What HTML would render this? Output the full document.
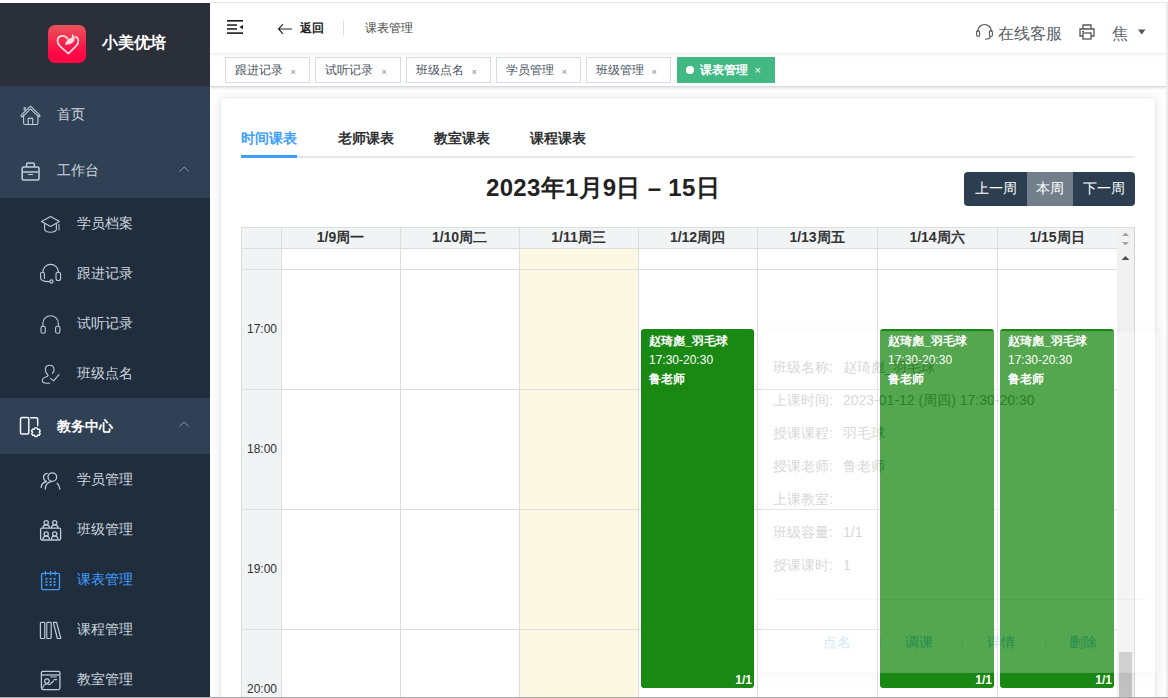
<!DOCTYPE html>
<html><head><meta charset="utf-8">
<style>
*{box-sizing:border-box;margin:0;padding:0}
html,body{width:1168px;height:698px;overflow:hidden;background:#fff;font-family:"Liberation Sans",sans-serif;}
.abs{position:absolute}
#side{position:absolute;left:0;top:3px;width:210px;height:695px;background:#304156;overflow:hidden}
#logo{position:absolute;left:0;top:0;width:210px;height:83px;background:#2b2f3a}
.logoimg{position:absolute;left:48px;top:22px;width:38px;height:38px;border-radius:7px;background:linear-gradient(#e9545c,#f81a4a 55%,#ff0744 80%)}
.logotxt{position:absolute;left:102px;top:30px;font-size:16px;font-weight:bold;color:#fff;line-height:20px}
.mi{position:absolute;left:0;width:210px;height:56px;color:#cdd5df;font-size:14px}
.mi .t{position:absolute;left:57px;top:0;line-height:56px}
.sub{position:absolute;left:0;width:210px;background:#1f2d3d}
.si{position:absolute;left:0;width:210px;height:50px;color:#cdd5df;font-size:14px}
.si .t{position:absolute;left:77px;top:0;line-height:50px}
.ic{position:absolute}
#main{position:absolute;left:210px;top:3px;width:956px;height:695px;background:#fff;overflow:hidden}
.tag{position:absolute;top:57px;height:26px;border:1px solid #d8dce5;background:#fff;color:#495060;font-size:12px;line-height:25px;padding-left:9px;white-space:nowrap}
.tag .x{position:absolute;right:13px;top:2px;font-size:11px;color:#888;transform:scale(.85)}
.tag.act{background:#42b983;border-color:#42b983;color:#fff;font-weight:bold;padding-left:22px}
.tag.act .x{color:#fff;font-weight:normal;font-size:13px;top:0;right:12px}
.tag .dot{position:absolute;left:8px;top:8px;width:8px;height:8px;border-radius:50%;background:#fff}
.tab{position:absolute;top:129px;font-size:14px;font-weight:bold;color:#303133;line-height:18px;white-space:nowrap}
.hd{height:21px;line-height:21px;text-align:center;font-size:14px;font-weight:bold;color:#333}
.tl{width:40px;padding-left:2px;text-align:center;font-size:12px;color:#333;line-height:16px}
.ev{background:#1a8914;border-radius:3px;color:#fff;font-size:12px;font-weight:bold;overflow:hidden}
.et{position:absolute;left:8px;top:3px;line-height:19px;white-space:nowrap}
.ef{position:absolute;right:2px;bottom:1px;line-height:14px}
.et span{font-weight:normal}
.pv{position:absolute;left:70px;top:0}
.pop{background:#fff;opacity:.25;border:1px solid #ebeef5;border-radius:4px;box-shadow:0 2px 12px 0 rgba(0,0,0,.1)}
.pr{left:12px;font-size:14px;color:#606266;line-height:16px;white-space:nowrap}
.pb{top:302px;font-size:14px;color:#409eff;line-height:16px;white-space:nowrap}
</style></head><body>
<div class="abs" style="left:0;top:0;width:1168px;height:3px;background:#fff"></div>
<div class="abs" style="left:210px;top:2px;width:958px;height:1px;background:#e6e6e6"></div>

<div id="side">
  <div id="logo">
    <div class="logoimg"><svg class="abs" style="left:0;top:0" width="38" height="38" viewBox="0 0 38 38" fill="none" stroke="rgba(255,255,255,.82)" stroke-width="1.8" stroke-linejoin="round" stroke-linecap="round">
<path d="M19.6 13.6 Q17.4 10.6 14 10.9 Q9.6 11.4 9.5 15.8 Q9.5 18.6 12.2 21.4 L20.4 28.6 L28 21.2 Q30.6 18.4 30.3 15.4 Q30 12.6 27.8 11.6"/>
<path d="M17.8 19.2 Q18.2 14.4 23.6 13.4 Q24.8 11.6 24.4 9.4 Q27.6 12.4 25.6 16 Q23.6 19.2 17.8 19.2 Z" fill="rgba(255,255,255,.82)" stroke-width="0.9"/>
</svg></div>
    <div class="logotxt">小美优培</div>
  </div>
  <div class="mi" style="top:83px"><span class="t">首页</span></div>
  <div class="mi" style="top:139px"><span class="t">工作台</span></div>
  <div class="sub" style="top:195px;height:200px">
    <div class="si" style="top:0"><span class="t">学员档案</span></div>
    <div class="si" style="top:50px"><span class="t">跟进记录</span></div>
    <div class="si" style="top:100px"><span class="t">试听记录</span></div>
    <div class="si" style="top:150px"><span class="t">班级点名</span></div>
  </div>
  <div class="mi" style="top:395px;color:#fff;font-weight:bold"><span class="t">教务中心</span></div>
  <div class="sub" style="top:451px;height:260px">
    <div class="si" style="top:0"><span class="t">学员管理</span></div>
    <div class="si" style="top:50px"><span class="t">班级管理</span></div>
    <div class="si" style="top:100px;color:#409eff"><span class="t">课表管理</span></div>
    <div class="si" style="top:150px"><span class="t">课程管理</span></div>
    <div class="si" style="top:200px"><span class="t">教室管理</span></div>
  </div>
</div>

<!-- ICONS -->
<svg class="abs" style="left:14px;top:98px" width="34" height="34" viewBox="0 0 34 34" fill="none" stroke="#bfcbd9" stroke-width="1.1" stroke-linecap="round" stroke-linejoin="round"><path d="M7.2 17.2 L16.5 8.2 L25.8 17.2 L25.8 18.6 L24.4 18.6 L16.5 10.9 L8.6 18.6 L7.2 18.6 Z"/><path d="M9.6 17 V25 Q9.6 26.5 11.1 26.5 H22.4 Q23.9 26.5 23.9 25 V17"/><path d="M14.2 26.4 V20.4 H18.7 V26.4"/><rect x="9.6" y="9" width="2.4" height="3.8" fill="#9aa7b6" stroke="none"/></svg>
<svg class="abs" style="left:14px;top:154px" width="34" height="34" viewBox="0 0 34 34" fill="none" stroke="#bfcbd9" stroke-width="1.1" stroke-linecap="round" stroke-linejoin="round"><rect x="8.2" y="13" width="16.8" height="13" rx="1.4" stroke-width="1.6"/><path d="M12.6 12.6 V10.2 Q12.6 8.9 13.9 8.9 H19 Q20.3 8.9 20.3 10.2 V12.6" stroke-width="1.5"/><path d="M9.6 18.1 H23.5" stroke-width="1.5"/><path d="M14.3 20.5 H18.6" stroke-width="1.1"/></svg>
<svg class="abs" style="left:34px;top:208px" width="34" height="34" viewBox="0 0 34 34" fill="none" stroke="#bfcbd9" stroke-width="1.1" stroke-linecap="round" stroke-linejoin="round"><path d="M7.5 13.4 L16.6 8.4 L25.5 13.4 L16.6 18.4 Z"/><path d="M10.6 15.6 V21.4 Q11.5 24.3 16.6 24.3 Q21.7 24.3 22.4 21.4 V15.6"/><rect x="24.2" y="15.9" width="1.5" height="6.6" fill="#8796a8" stroke="none"/></svg>
<svg class="abs" style="left:34px;top:257px" width="34" height="34" viewBox="0 0 34 34" fill="none" stroke="#bfcbd9" stroke-width="1.1" stroke-linecap="round" stroke-linejoin="round"><path d="M8.8 15.2 A7.8 7.8 0 0 1 24.4 15.2"/><path d="M10.4 21.4 V16.4 Q10.4 15.2 8.4 15.2 Q6.6 15.2 6.6 16.6 V21 Q6.6 24.6 14.6 24.6 H15.8"/><rect x="22" y="15.2" width="4.6" height="8.3" rx="2"/><circle cx="17.5" cy="24.5" r="1.6"/></svg>
<svg class="abs" style="left:34px;top:306px" width="34" height="34" viewBox="0 0 34 34" fill="none" stroke="#bfcbd9" stroke-width="1.1" stroke-linecap="round" stroke-linejoin="round"><path d="M8.9 20 V17.4 A7.7 7.7 0 0 1 24.3 17.4 V20"/><rect x="7" y="20.2" width="4.3" height="7" rx="1.8"/><rect x="21.6" y="20.2" width="4.3" height="7" rx="1.8"/></svg>
<svg class="abs" style="left:34px;top:357px" width="34" height="34" viewBox="0 0 34 34" fill="none" stroke="#bfcbd9" stroke-width="1.1" stroke-linecap="round" stroke-linejoin="round"><path d="M18.5 16.4 Q20 14.8 20 12.6 Q20 8.2 15.6 8.2 Q11.3 8.2 11.3 12.6 Q11.3 15.8 13.8 17.8 Q14.8 18.8 12.6 19.8 Q8.3 21 8.3 23.6 Q8.3 26.3 12.5 26.3 H15.6"/><path d="M16.7 21.4 L19.6 23.8 L25 17.7"/></svg>
<svg class="abs" style="left:14px;top:405px" width="34" height="34" viewBox="0 0 34 34" fill="none" stroke="#f4f6f8" stroke-width="1.1" stroke-linecap="round" stroke-linejoin="round"><rect x="6.5" y="12.4" width="8.3" height="16.6" rx="1.5" stroke-width="1.5"/><path d="M16.6 12.8 H22.2 Q23.7 12.8 23.7 14.3 V20.6" stroke-width="1.5"/><path d="M20.25 24.34 L20.81 22.83 L22.99 22.83 L23.55 24.34 L23.55 24.34 L25.14 24.07 L26.23 25.96 L25.20 27.20 L25.20 27.20 L26.23 28.44 L25.14 30.33 L23.55 30.06 L23.55 30.06 L22.99 31.57 L20.81 31.57 L20.25 30.06 L20.25 30.06 L18.66 30.33 L17.57 28.44 L18.60 27.20 L18.60 27.20 L17.57 25.96 L18.66 24.07 L20.25 24.34 Z" stroke-width="1.4"/></svg>
<svg class="abs" style="left:34px;top:463px" width="34" height="34" viewBox="0 0 34 34" fill="none" stroke="#bfcbd9" stroke-width="1.1" stroke-linecap="round" stroke-linejoin="round"><circle cx="18.3" cy="14.1" r="4.3" stroke-width="1.3"/><path d="M11.3 26 Q11.5 19.6 17.4 18.7" stroke-width="1.3"/><path d="M23.1 20.2 Q25.5 22.3 25.9 26" stroke-width="1.3"/><path d="M13.2 10.4 Q9.6 11 9.6 14.3 Q9.6 16.8 11.4 18" stroke-width="1.3"/><path d="M7.1 24.4 Q7.7 19.6 12.6 18.5" stroke-width="1.3"/></svg>
<svg class="abs" style="left:34px;top:513px" width="34" height="34" viewBox="0 0 34 34" fill="none" stroke="#bfcbd9" stroke-width="1.1" stroke-linecap="round" stroke-linejoin="round"><rect x="6.6" y="15.1" width="20" height="11.9" rx="1.4" stroke-width="1.3"/><circle cx="12.2" cy="9.7" r="2.1" stroke-width="1.3"/><path d="M9 14.6 Q9.3 11.9 12.2 11.9 Q15.1 11.9 15.5 14.6" stroke-width="1.3"/><circle cx="20.7" cy="9.7" r="2.1" stroke-width="1.3"/><path d="M17.5 14.6 Q17.8 11.9 20.7 11.9 Q23.6 11.9 24 14.6" stroke-width="1.3"/><circle cx="12.2" cy="20.9" r="2.1" stroke-width="1.3"/><path d="M9 25.9 Q9.3 23.1 12.2 23.1 Q15.1 23.1 15.5 25.9" stroke-width="1.3"/><circle cx="20.7" cy="20.9" r="2.1" stroke-width="1.3"/><path d="M17.5 25.9 Q17.8 23.1 20.7 23.1 Q23.6 23.1 24 25.9" stroke-width="1.3"/></svg>
<svg class="abs" style="left:34px;top:563px" width="34" height="34" viewBox="0 0 34 34" fill="none" stroke="#bfcbd9" stroke-width="1.1" stroke-linecap="round" stroke-linejoin="round"><rect x="7.6" y="10.4" width="17.9" height="16.2" rx="1.6" stroke="#409eff" stroke-width="1.3"/><path d="M11.4 8.3 V12 M16.6 8.3 V12 M21.2 8.3 V12" stroke="#409eff" stroke-width="1.1"/><rect x="11.5" y="14.9" width="1.9" height="1.8" fill="#409eff" stroke="none"/><rect x="11.5" y="18.1" width="1.9" height="1.8" fill="#409eff" stroke="none"/><rect x="11.5" y="21.0" width="1.9" height="1.8" fill="#409eff" stroke="none"/><rect x="15.700000000000001" y="14.9" width="1.9" height="1.8" fill="#409eff" stroke="none"/><rect x="15.700000000000001" y="18.1" width="1.9" height="1.8" fill="#409eff" stroke="none"/><rect x="15.700000000000001" y="21.0" width="1.9" height="1.8" fill="#409eff" stroke="none"/><rect x="19.6" y="14.9" width="1.9" height="1.8" fill="#409eff" stroke="none"/><rect x="19.6" y="18.1" width="1.9" height="1.8" fill="#409eff" stroke="none"/><rect x="19.6" y="21.0" width="1.9" height="1.8" fill="#409eff" stroke="none"/></svg>
<svg class="abs" style="left:34px;top:613px" width="34" height="34" viewBox="0 0 34 34" fill="none" stroke="#bfcbd9" stroke-width="1.1" stroke-linecap="round" stroke-linejoin="round"><rect x="6.4" y="9.3" width="4.4" height="16.2" rx="1" stroke-width="1.2"/><rect x="12.6" y="9.3" width="4.6" height="16.2" rx="1" stroke-width="1.2"/><rect x="12.3" y="9.8" width="1" height="15.3" fill="#8796a8" stroke="none"/><path d="M19.3 9.3 H22.6 L26.8 25.5 H23.4 Z" stroke-width="1.2"/></svg>
<svg class="abs" style="left:34px;top:663px" width="34" height="34" viewBox="0 0 34 34" fill="none" stroke="#bfcbd9" stroke-width="1.1" stroke-linecap="round" stroke-linejoin="round"><rect x="7.4" y="8.3" width="18.5" height="18.3" rx="1.5" stroke-width="1.3"/><rect x="8" y="11" width="17.2" height="1.9" fill="#8796a8" stroke="none"/><rect x="16.1" y="13.1" width="6.8" height="1.5" fill="#8796a8" stroke="none"/><circle cx="12.9" cy="18.1" r="2.3" stroke-width="1.2"/><path d="M8.8 24.8 Q9.4 21 13.2 21 Q14.9 21 15.6 21.6 L19.6 18" stroke-width="1.2"/><path d="M20.3 16.6 H22.6" stroke-width="1.2"/></svg>
<svg class="abs" style="left:175px;top:162px" width="18" height="14" viewBox="0 0 18 14" fill="none" stroke="#8a9aab" stroke-width="1"><path d="M4.5 9.5 L9.2 5 L13.7 9.5"/></svg>
<svg class="abs" style="left:175px;top:417px" width="18" height="14" viewBox="0 0 18 14" fill="none" stroke="#8a9aab" stroke-width="1"><path d="M4.5 9.5 L9.2 5 L13.7 9.5"/></svg>
<!-- /ICONS -->
<div id="main">
  <!-- header -->
  <div class="abs" style="left:0;top:50px;width:956px;height:34px;background:#fff;border-bottom:1px solid #d8dce5;box-shadow:0 1px 3px 0 rgba(0,0,0,.12),0 0 3px 0 rgba(0,0,0,.04)"></div>
  <div class="abs" style="left:0;top:0;width:956px;height:50px;background:#fff;box-shadow:0 1px 4px rgba(0,21,41,.1)"></div>
  <!-- card -->
  <div class="abs" style="left:10px;top:94px;width:936px;height:620px;background:#fff;border:1px solid #e6ebf5;border-radius:4px;box-shadow:0 2px 12px 0 rgba(0,0,0,.1)"></div>
</div>
<div class="abs" style="left:1166px;top:3px;width:2px;height:695px;background:#ececec"></div>
<div class="abs" style="left:0;top:697px;width:1168px;height:1px;background:#a8a8a8"></div>


<!-- HEADER CONTENT -->
<svg class="abs" style="left:226px;top:19px" width="18" height="16" viewBox="0 0 18 16">
  <rect x="1" y="1" width="16" height="1.6" fill="#1a1a1a"/>
  <rect x="1" y="5.3" width="10" height="1.5" fill="#1a1a1a"/>
  <rect x="1" y="9.2" width="10" height="1.5" fill="#1a1a1a"/>
  <rect x="1" y="13.3" width="16" height="1.6" fill="#1a1a1a"/>
  <path d="M13.4 8 L17 6 L17 10.2 Z" fill="#1a1a1a"/>
</svg>
<svg class="abs" style="left:277px;top:22.7px" width="16" height="12" viewBox="0 0 16 12">
  <path d="M6 1.2 L1.5 6 L6 10.8 M1.5 6 H15" stroke="#222" stroke-width="1.1" fill="none"/>
</svg>
<div class="abs" style="left:300px;top:20px;font-size:12px;font-weight:bold;color:#222;line-height:16px">返回</div>
<div class="abs" style="left:343px;top:20px;width:1px;height:16px;background:#dcdfe6"></div>
<div class="abs" style="left:365px;top:20px;font-size:12px;color:#4a4a4a;line-height:16px">课表管理</div>

<svg class="abs" style="left:975px;top:23px" width="19" height="18" viewBox="0 0 19 18">
  <path d="M2.6 9 V8.4 A6.9 6.9 0 0 1 16.4 8.4 V9" stroke="#555" stroke-width="1.2" fill="none"/>
  <rect x="1.6" y="7.6" width="3" height="5.8" rx="1.5" stroke="#555" stroke-width="1.1" fill="none"/>
  <rect x="14.4" y="7.6" width="3" height="5.8" rx="1.5" stroke="#555" stroke-width="1.1" fill="none"/>
  <path d="M15.6 13.4 Q15 16.2 10 16.2" stroke="#555" stroke-width="1.1" fill="none"/>
</svg>
<div class="abs" style="left:998px;top:24px;font-size:16px;color:#5a5e66;line-height:20px">在线客服</div>
<svg class="abs" style="left:1078px;top:23px" width="18" height="18" viewBox="0 0 18 18">
  <path d="M5 6 V2 H13 V6" stroke="#555" stroke-width="1.3" fill="none"/>
  <path d="M5 13 H2 V6 H16 V13 H13" stroke="#555" stroke-width="1.3" fill="none"/>
  <rect x="5" y="10" width="8" height="6" stroke="#555" stroke-width="1.3" fill="none"/>
  <rect x="4" y="8" width="2" height="1" fill="#555"/>
</svg>
<div class="abs" style="left:1112px;top:24px;font-size:16px;color:#5a5e66;line-height:20px">焦</div>
<svg class="abs" style="left:1138px;top:29px" width="8" height="6" viewBox="0 0 8 6"><path d="M0 0.5 H7.5 L3.75 5.5Z" fill="#555"/></svg>

<!-- TAGS -->
<div class="tag" style="left:225px;width:85px">跟进记录<span class="x">×</span></div>
<div class="tag" style="left:315px;width:86px">试听记录<span class="x">×</span></div>
<div class="tag" style="left:406px;width:85px">班级点名<span class="x">×</span></div>
<div class="tag" style="left:496px;width:85px">学员管理<span class="x">×</span></div>
<div class="tag" style="left:586px;width:85px">班级管理<span class="x">×</span></div>
<div class="tag act" style="left:677px;width:98px"><span class="dot"></span>课表管理<span class="x">×</span></div>

<!-- TABS -->
<div class="tab" style="left:241px;color:#409eff">时间课表</div>
<div class="tab" style="left:338px">老师课表</div>
<div class="tab" style="left:434px">教室课表</div>
<div class="tab" style="left:530px">课程课表</div>
<div class="abs" style="left:241px;top:156px;width:894px;height:2px;background:#e4e7ed"></div>
<div class="abs" style="left:241px;top:155px;width:56px;height:3px;background:#409eff"></div>
<!-- TITLE -->
<div class="abs" style="left:486px;top:173px;font-size:24px;font-weight:bold;color:#222;line-height:30px;white-space:nowrap"><span style="letter-spacing:0.3px">2023年1月9日 – 15日</span></div>
<!-- BUTTONS -->
<div class="abs" style="left:964px;top:172px;width:171px;height:34px;border-radius:4px;overflow:hidden;font-size:14px;color:#fff;line-height:33px">
  <div class="abs" style="left:0;top:0;width:63px;height:34px;background:#2c3e50;text-align:center">上一周</div>
  <div class="abs" style="left:63px;top:0;width:46px;height:34px;background:#737e8b;text-align:center">本周</div>
  <div class="abs" style="left:109px;top:0;width:62px;height:34px;background:#2c3e50;text-align:center">下一周</div>
</div>
<!-- CALENDAR -->
<div class="abs" style="left:241px;top:227px;width:894px;height:470px;overflow:hidden">
<div class="abs" style="left:0px;top:0px;width:876px;height:21px;background:#f0f4f5;"></div>
<div class="abs" style="left:0px;top:21px;width:40px;height:500px;background:#f0f4f5;"></div>
<div class="abs" style="left:278px;top:21px;width:119px;height:500px;background:#fcf8e3;"></div>
<div class="abs" style="left:876px;top:0px;width:17px;height:500px;background:#f1f1f1;"></div>
<div class="abs" style="left:0px;top:0px;width:876px;height:1px;background:#ddd;"></div>
<div class="abs" style="left:0px;top:21px;width:876px;height:1px;background:#ddd;"></div>
<div class="abs" style="left:0px;top:42px;width:876px;height:1px;background:#ddd;"></div>
<div class="abs" style="left:0px;top:162px;width:876px;height:1px;background:#ddd;"></div>
<div class="abs" style="left:0px;top:282px;width:876px;height:1px;background:#ddd;"></div>
<div class="abs" style="left:0px;top:402px;width:876px;height:1px;background:#ddd;"></div>
<div class="abs" style="left:876px;top:0px;width:17px;height:1px;background:#ddd;"></div>
<div class="abs" style="left:0px;top:0px;width:1px;height:500px;background:#ddd;"></div>
<div class="abs" style="left:40px;top:0px;width:1px;height:500px;background:#ddd;"></div>
<div class="abs" style="left:159px;top:0px;width:1px;height:500px;background:#ddd;"></div>
<div class="abs" style="left:278px;top:0px;width:1px;height:500px;background:#ddd;"></div>
<div class="abs" style="left:397px;top:0px;width:1px;height:500px;background:#ddd;"></div>
<div class="abs" style="left:516px;top:0px;width:1px;height:500px;background:#ddd;"></div>
<div class="abs" style="left:636px;top:0px;width:1px;height:500px;background:#ddd;"></div>
<div class="abs" style="left:756px;top:0px;width:1px;height:500px;background:#ddd;"></div>
<div class="abs hd" style="left:40px;top:0;width:119px">1/9周一</div>
<div class="abs hd" style="left:159px;top:0;width:119px">1/10周二</div>
<div class="abs hd" style="left:278px;top:0;width:119px">1/11周三</div>
<div class="abs hd" style="left:397px;top:0;width:119px">1/12周四</div>
<div class="abs hd" style="left:516px;top:0;width:120px">1/13周五</div>
<div class="abs hd" style="left:636px;top:0;width:120px">1/14周六</div>
<div class="abs hd" style="left:756px;top:0;width:120px">1/15周日</div>
<div class="abs tl" style="left:0;top:94px">17:00</div>
<div class="abs tl" style="left:0;top:214px">18:00</div>
<div class="abs tl" style="left:0;top:334px">19:00</div>
<div class="abs tl" style="left:0;top:454px">20:00</div>
<svg class="abs" style="left:876px;top:0px" width="17" height="60" viewBox="0 0 17 60"><path d="M5 9 L8.5 5.5 L12 9Z" fill="#a3a3a3"/><path d="M5 15 L8.5 18.5 L12 15Z" fill="#a3a3a3"/><path d="M4.5 33 L8.5 29 L12.5 33Z" fill="#505050"/></svg>
<div class="abs" style="left:878px;top:425px;width:13px;height:60px;background:#c1c1c1;"></div>
<div class="abs ev" style="left:400px;top:102px;width:113px;height:359px"><div class="et">赵琦彪_羽毛球<br><span>17:30-20:30</span><br>鲁老师</div><div class="ef">1/1</div></div>
<div class="abs ev" style="left:639px;top:102px;width:114px;height:359px"><div class="et">赵琦彪_羽毛球<br><span>17:30-20:30</span><br>鲁老师</div><div class="ef">1/1</div></div>
<div class="abs ev" style="left:759px;top:102px;width:114px;height:359px"><div class="et">赵琦彪_羽毛球<br><span>17:30-20:30</span><br>鲁老师</div><div class="ef">1/1</div></div>
<div class="abs" style="left:893px;top:0px;width:1px;height:500px;background:#d4d4d4;"></div>
</div>
<div class="abs pop" style="left:760px;top:331px;width:399px;height:342px">
<div class="abs pr" style="top:27px">班级名称:<span class="pv">赵琦彪_羽毛球</span></div>
<div class="abs pr" style="top:60px">上课时间:<span class="pv">2023-01-12 (周四) 17:30-20:30</span></div>
<div class="abs pr" style="top:93px">授课课程:<span class="pv">羽毛球</span></div>
<div class="abs pr" style="top:126px">授课老师:<span class="pv">鲁老师</span></div>
<div class="abs pr" style="top:159px">上课教室:<span class="pv"></span></div>
<div class="abs pr" style="top:192px">班级容量:<span class="pv">1/1</span></div>
<div class="abs pr" style="top:225px">授课课时:<span class="pv">1</span></div>
<div class="abs" style="left:12px;top:267px;width:374px;height:1px;background:#e4e4e4"></div>
<div class="abs pb" style="left:62px">点名</div>
<div class="abs pb" style="left:144px">调课</div>
<div class="abs pb" style="left:226px">详情</div>
<div class="abs pb" style="left:308px">删除</div>
<div class="abs" style="left:119px;top:305px;width:1px;height:13px;background:#dcdfe6"></div>
<div class="abs" style="left:201px;top:305px;width:1px;height:13px;background:#dcdfe6"></div>
<div class="abs" style="left:284px;top:305px;width:1px;height:13px;background:#dcdfe6"></div>
</div>
<!-- /CALENDAR -->
</body></html>
